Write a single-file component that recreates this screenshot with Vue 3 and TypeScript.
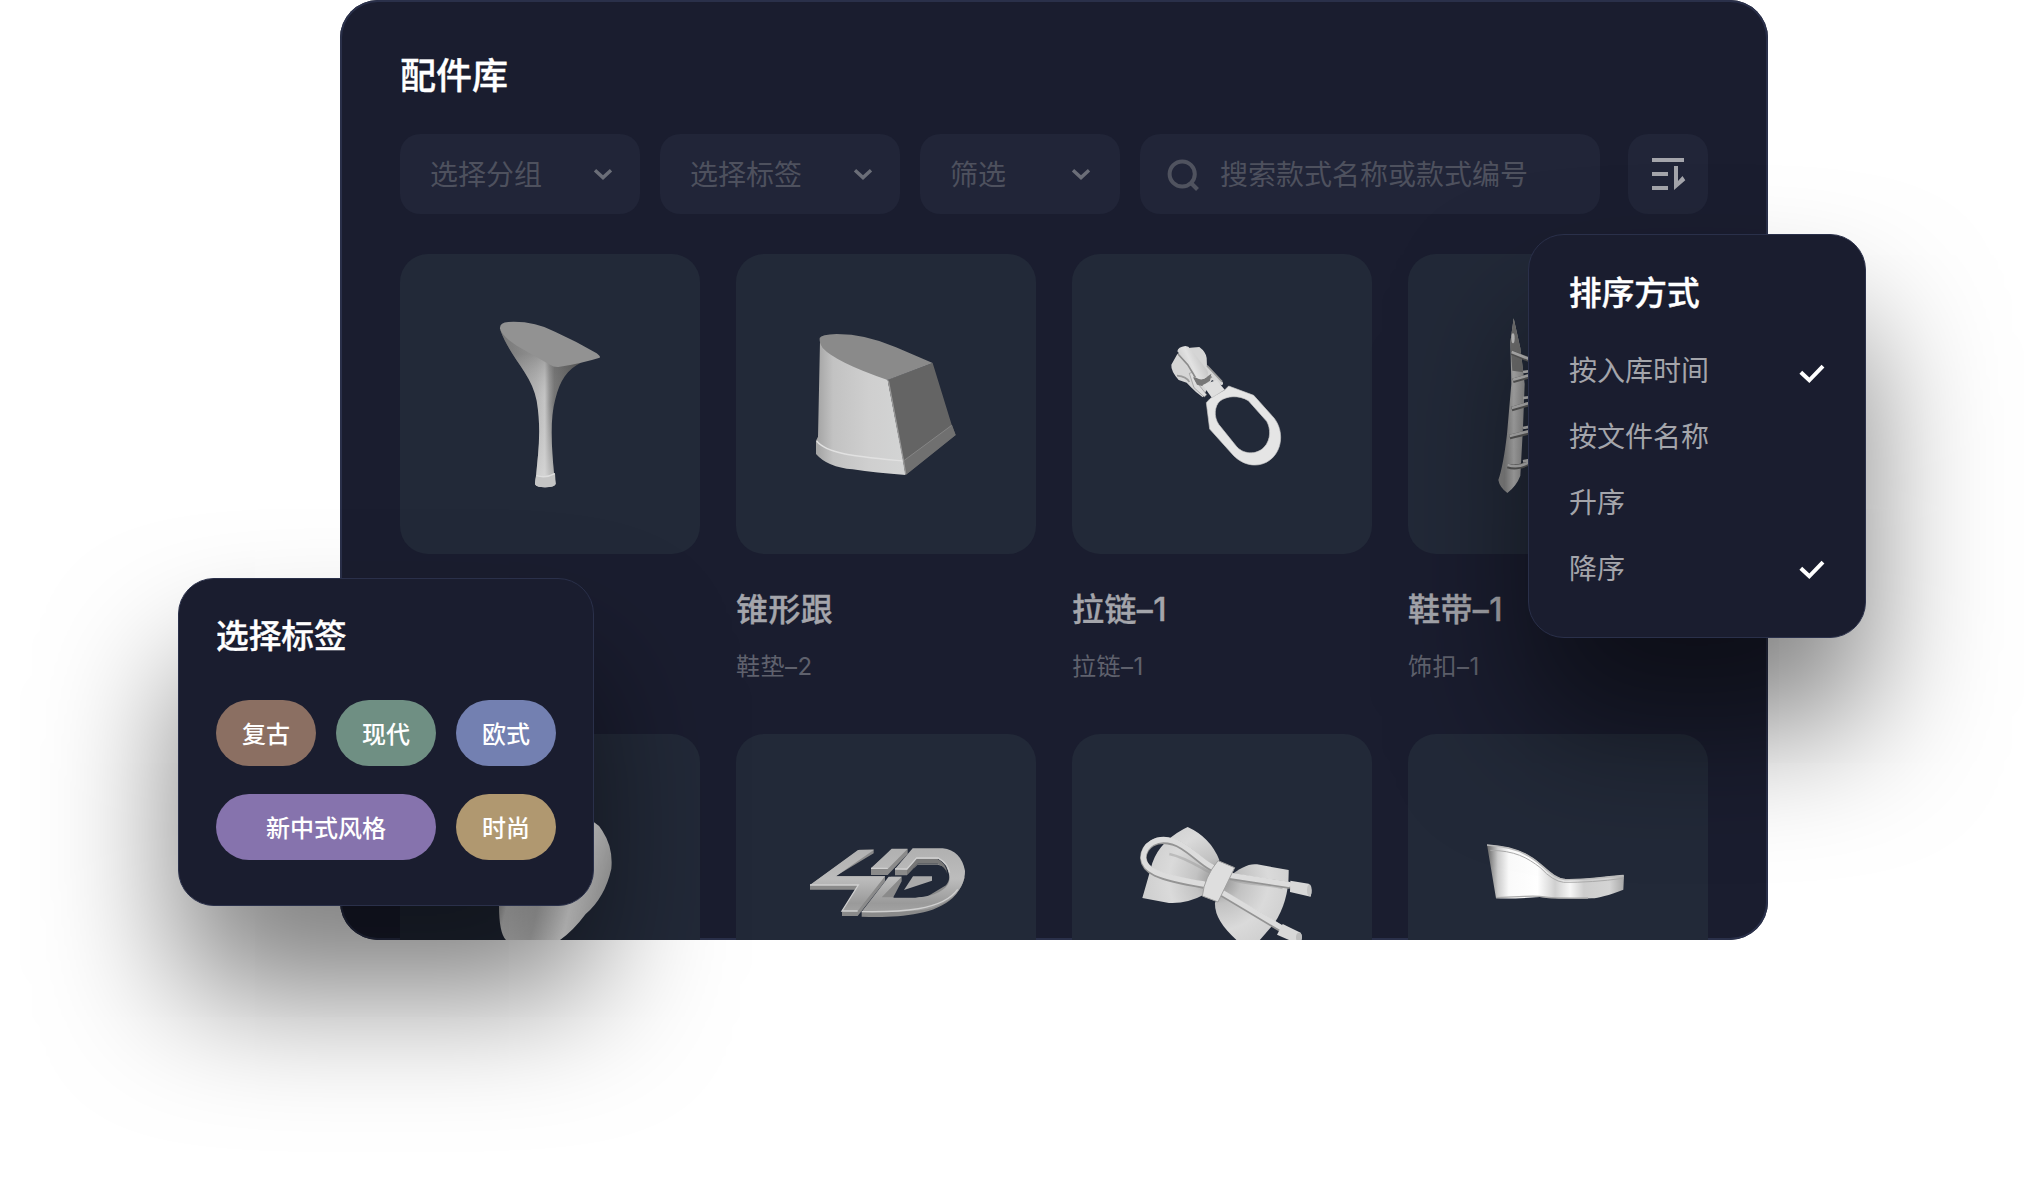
<script setup lang="ts">
interface Filter { label: string; size: 'wide' | 'narrow' }
interface Part { id: string; name?: string; note?: string }
interface SortOption { label: string; checked: boolean }
interface Tag { label: string; color: string; wide?: boolean }

const filters: Filter[] = [
  { label: '选择分组', size: 'wide' },
  { label: '选择标签', size: 'wide' },
  { label: '筛选', size: 'narrow' },
]

const parts: Part[] = [
  { id: 'heel' },
  { id: 'block', name: '锥形跟', note: '鞋垫–2' },
  { id: 'zip', name: '拉链–1', note: '拉链–1' },
  { id: 'strap', name: '鞋带–1', note: '饰扣–1' },
  { id: 'curve' },
  { id: 'badge' },
  { id: 'bow' },
  { id: 'wedge' },
]

const sortOptions: SortOption[] = [
  { label: '按入库时间', checked: true },
  { label: '按文件名称', checked: false },
  { label: '升序', checked: false },
  { label: '降序', checked: true },
]

const tags: Tag[] = [
  { label: '复古', color: '#8b6f62' },
  { label: '现代', color: '#6f8f83' },
  { label: '欧式', color: '#7380b1' },
  { label: '新中式风格', color: '#8673ad', wide: true },
  { label: '时尚', color: '#b09870' },
]
</script>

<template>
  <main class="stage">
    <section class="panel">
      <h1 class="panel-title">配件库</h1>
      <div class="toolbar">
        <button v-for="f in filters" :key="f.label" class="select" :class="f.size">
          <span>{{ f.label }}</span>
          <svg width="20" height="12" viewBox="0 0 20 12"><path d="M2 2.2 10 9.6 18 2.2" fill="none" stroke="#6b6e78" stroke-width="3.4" /></svg>
        </button>
        <div class="search">
          <svg width="36" height="36" viewBox="0 0 36 36" fill="none" stroke="#50535f" stroke-width="4">
            <circle cx="16.2" cy="18" r="12.6" /><path d="M25 27 31.5 33.5" />
          </svg>
          <span>搜索款式名称或款式编号</span>
        </div>
        <button class="sort">
          <svg width="34" height="32" viewBox="0 0 34 32" fill="#a4a5ab">
            <path d="M0 0h32v4H0zM0 14h16v4H0zM0 28h16v4H0z" />
            <path d="M22 8h4v15l4.5-5 2.8 4.2L22 32z" />
          </svg>
        </button>
      </div>

      <div class="grid">
        <article v-for="p in parts" :key="p.id" class="part">
          <div class="thumb">
            <svg v-if="p.id === 'heel'" viewBox="0 0 900 900">
              <defs>
                <linearGradient id="heel-stem" x1="300" x2="540" y1="0" y2="0" gradientUnits="userSpaceOnUse">
                  <stop offset="0" stop-color="#858585" /><stop offset=".45" stop-color="#b4b4b4" /><stop offset=".56" stop-color="#c5c5c5" /><stop offset=".62" stop-color="#8d8d8d" /><stop offset=".68" stop-color="#686868" /><stop offset="1" stop-color="#3e3e3e" />
                </linearGradient>
                <linearGradient id="heel-light" x1="0" x2="0" y1="300" y2="670" gradientUnits="userSpaceOnUse">
                  <stop offset="0" stop-color="#666" stop-opacity=".45" /><stop offset=".4" stop-color="#ccc" stop-opacity=".1" /><stop offset="1" stop-color="#ddd" stop-opacity=".65" />
                </linearGradient>
              </defs>
              <path d="M301 228C330 310 396 360 410 440 425 530 414 600 408 668L405 690Q408 700 436 700 464 700 467 690L462 658C456 590 448 500 466 435 480 380 500 347 545 325L465 330Z" fill="url(#heel-stem)" />
              <path d="M301 228C330 310 396 360 410 440 425 530 414 600 408 668L405 690Q408 700 436 700 464 700 467 690L462 658C456 590 448 500 466 435 480 380 500 347 545 325L465 330Z" fill="url(#heel-light)" />
              <path d="M300 225Q298 205 325 204 400 200 465 233 530 262 590 298 603 308 599 311 545 328 475 339 460 340 450 332L350 275Q310 250 300 225Z" fill="#929292" />
              <path d="M408 664Q436 672 465 657L467 690Q460 700 434 700 408 699 405 689Z" fill="#c4c4c4" />
              <path d="M409 665Q438 674 464 659" fill="none" stroke="#dedede" stroke-width="4" />
            </svg>

            <svg v-else-if="p.id === 'block'" viewBox="0 0 900 900">
              <defs>
                <linearGradient id="block-side" x1="245" x2="500" y1="0" y2="0" gradientUnits="userSpaceOnUse">
                  <stop offset="0" stop-color="#a5a5a5" /><stop offset=".18" stop-color="#c2c2c2" /><stop offset=".6" stop-color="#cfcfcf" /><stop offset="1" stop-color="#d3d4d4" />
                </linearGradient>
              </defs>
              <path d="M252 262 246 548 240 560V600Q275 640 350 646 420 657 509 663L500 610 455 377Z" fill="url(#block-side)" />
              <path d="M455 377 590 327 647 512 659 543 509 663 502 620Z" fill="#646464" />
              <path d="M502 621 648 513 659 543 509 663Z" fill="#707070" />
              <path d="M251 252Q255 242 302 240 390 240 480 280L590 327 455 378Q300 325 260 282 249 265 251 252Z" fill="#8a8a8a" />
              <path d="M242 561C272 600 360 607 500 621" fill="none" stroke="#e1e1e1" stroke-width="4" />
              <path d="M502 621 647 514" stroke="#858585" stroke-width="3" />
              <path d="M457 380 502 618 509 660" fill="none" stroke="#999" stroke-width="4" />
            </svg>

            <svg v-else-if="p.id === 'zip'" viewBox="0 0 900 900">
              <defs>
                <linearGradient id="zip-bar" x1="320" x2="410" y1="340" y2="300" gradientUnits="userSpaceOnUse">
                  <stop offset="0" stop-color="#c5c5c5" /><stop offset=".4" stop-color="#e2e2e2" /><stop offset="1" stop-color="#b5b5b5" />
                </linearGradient>
              </defs>
              <path d="M355 281 382 279Q402 294 404 312L405 337 452 384Q456 392 448 394L420 378 392 430 372 414Q354 397 344 386L320 378Q296 350 298 332L316 300Z" fill="#d5d5d5" />
              <path d="M315 365Q345 368 352 384M405 335 450 383M385 386 420 368" fill="none" stroke="#9a9a9a" stroke-width="5" />
              <path d="M352 358 362 355 372 382 404 422 397 429 366 401Z" fill="#ddd" stroke="#8f8f8f" stroke-width="2" />
              <path d="M363 370 395 375 418 359 414 380 390 396 375 392Z" fill="#777" />
              <path d="M316 292Q318 279 340 276 350 276 356 285L405 348Q411 357 405 369 390 382 374 372Q364 350 343 324Z" fill="url(#zip-bar)" />
              <path d="M318 300 347 332 370 370" fill="none" stroke="#8b8b8b" stroke-width="5" />
              <path d="M392 393 434 378 458 407 420 432Z" fill="#dedede" />
              <path fill-rule="evenodd" d="M403 446 414 434 458 408 470 396 545 424 606 492C636 530 632 588 595 617 560 644 515 635 485 605L413 525ZM444 441C428 455 424 487 440 511L490 573C511 602 553 604 576 580 598 557 596 523 584 502L529 440C500 422 463 426 444 441Z" fill="#e5e5e5" stroke="#c9c9c9" stroke-width="2" />
            </svg>

            <svg v-else-if="p.id === 'strap'" viewBox="0 0 900 900">
              <defs>
                <linearGradient id="strap-skin" x1="290" x2="345" y1="0" y2="0" gradientUnits="userSpaceOnUse">
                  <stop offset="0" stop-color="#858585" /><stop offset=".5" stop-color="#b8b8b8" /><stop offset="1" stop-color="#9a9a9a" />
                </linearGradient>
              </defs>
              <path d="M317 193 337 282 350 390 345 520 337 665Q326 695 298 717 275 700 271 678 286 635 297 540L310 390 307 265Z" fill="url(#strap-skin)" />
              <path d="M317 193 337 282 346 355 313 350 307 265Z" fill="#707070" />
              <ellipse cx="315" cy="253" rx="5" ry="15" fill="#c5c5c5" />
              <g fill="none" stroke="#5c5c5c" stroke-width="14"><path d="M311 296 366 318M315 380 366 366M311 465 366 449M305 549 366 534M299 636C326 645 350 633 366 626" /></g>
              <g fill="none" stroke="#bababa" stroke-width="8"><path d="M311 294 366 316M315 377 366 363M311 462 366 446M305 546 366 531M299 633C326 642 350 633 366 623M345 354 370 351M345 432 370 429M345 522 370 517M345 622 370 617" /></g>
            </svg>

            <svg v-else-if="p.id === 'curve'" viewBox="0 0 900 900">
              <defs>
                <linearGradient id="curve-skin" x1="300" x2="640" y1="420" y2="500" gradientUnits="userSpaceOnUse">
                  <stop offset="0" stop-color="#909090" /><stop offset=".12" stop-color="#dcdcdc" /><stop offset=".38" stop-color="#c6c6c6" /><stop offset=".65" stop-color="#ececec" /><stop offset="1" stop-color="#9c9c9c" />
                </linearGradient>
              </defs>
              <path d="M540 250Q592 260 607 290 640 340 634 404 615 490 557 540 520 590 480 618L320 620Q297 600 297 515L520 490Z" fill="url(#curve-skin)" />
            </svg>

            <svg v-else-if="p.id === 'badge'" viewBox="0 0 900 900">
              <defs>
                <linearGradient id="metal" x1="0" x2="0" y1="340" y2="550" gradientUnits="userSpaceOnUse">
                  <stop offset="0" stop-color="#b0b0b0" /><stop offset=".45" stop-color="#bcbcbc" /><stop offset=".8" stop-color="#9a9a9a" /><stop offset="1" stop-color="#a8a8a8" />
                </linearGradient>
              </defs>
              <g fill="#8a8a8a">
                <path d="M222 453V467H367L318 534V546H365L447 442V426H300L413 358V346L370 347Z" />
                <path d="M405 403V423H455L515 360V345H470Z" /><path d="M477 406V424H513L545 390H610C640 396 650 430 630 454L570 490H472L497 442V428H465L377 535V548C470 551 590 548 650 492 680 462 691 430 686 400V435L675 400Z" />
              </g>
              <path d="M222 453 366 348H413L300 427H447L365 531H318L367 453Z" fill="url(#metal)" />
              <path d="M405 403 467 344H515L455 405Z" fill="url(#metal)" />
              <path d="M477 405 530 343H620Q676 350 687 411C687 458 654 507 573 526Q500 537 377 533L458 428H497L437 490H538C609 487 646 458 640 425Q636 391 607 375H542L513 407Z" fill="url(#metal)" />
              <path d="M630 400C648 440 600 482 538 491H472L504 444V472L588 440V427H531L513 424 545 392H605Z" fill="#222938" />
              <path d="M513 407V422L545 389H605Q630 400 634 420 632 390 605 375H542Z" fill="#777" />
              <path d="M504 468 531 427H588V440Z" fill="#aaa" />
              <path d="M222 453H367L318 531H365M405 403H455M477 405H513L542 372H607Q636 388 641 416M377 533C490 535 620 530 665 466" fill="none" stroke="#d0d0d0" stroke-width="4" />
            </svg>

            <svg v-else-if="p.id === 'bow'" viewBox="0 0 900 900">
              <defs>
                <radialGradient id="bow-cloth" cx="440" cy="440" r="230" gradientUnits="userSpaceOnUse">
                  <stop offset="0" stop-color="#8c8c8c" /><stop offset=".3" stop-color="#c2c2c2" /><stop offset=".65" stop-color="#dadada" /><stop offset="1" stop-color="#cecece" />
                </radialGradient>
              </defs>
              <path d="M211 492 236 405Q252 330 335 285L347 279Q415 310 442 378L432 415 400 480Q345 510 291 507Z" fill="url(#bow-cloth)" />
              <path d="M468 431Q520 386 555 391L650 408Q652 500 607 568L560 622H498Q426 560 429 506Z" fill="url(#bow-cloth)" />
              <path d="M292 360C340 370 380 398 420 419M255 415 395 458M475 435C530 455 580 448 632 462" fill="none" stroke="#929292" stroke-width="8" opacity=".4" />
              <g fill="none" stroke-linecap="round">
                <path d="M420 402C385 385 345 336 303 325 254 309 215 334 214 373 217 410 250 431 395 454M474 427 650 454M452 480 625 583" stroke="#949494" stroke-width="20" />
                <path d="M419 398C385 381 345 332 303 321 254 306 215 332 214 371 217 406 250 426 395 450M474 424 650 451M452 476 625 579" stroke="#dcdcdc" stroke-width="16" />
              </g>
              <path d="M438 380 488 401 438 504 391 486Q397 430 438 380Z" fill="#dedede" stroke="#a1a1a1" stroke-width="3" />
              <path d="M655 440 710 449Q723 466 716 488L654 474Z" fill="#d8d8d8" /><ellipse cx="712" cy="469" rx="7" ry="18" fill="#c4c4c4" />
              <path d="M632 570 686 596Q693 608 685 622H660L615 602Z" fill="#d8d8d8" /><ellipse cx="681" cy="610" rx="9" ry="14" fill="#bdbdbd" />
            </svg>

            <svg v-else viewBox="0 0 900 900">
              <defs>
                <linearGradient id="wedge-skin" x1="237" x2="646" y1="0" y2="0" gradientUnits="userSpaceOnUse">
                  <stop offset="0" stop-color="#666" /><stop offset=".08" stop-color="#ccc" /><stop offset=".16" stop-color="#fafafa" /><stop offset=".37" stop-color="#fff" /><stop offset=".5" stop-color="#cfcfcf" /><stop offset=".61" stop-color="#f6f6f6" /><stop offset=".71" stop-color="#cdcdcd" /><stop offset=".9" stop-color="#d4d4d4" /><stop offset="1" stop-color="#aaa" />
                </linearGradient>
              </defs>
              <path d="M237 332Q319 337 365 367C406 390 430 431 471 436 535 438 590 427 648 424L646 467Q580 492 552 493 470 495 396 489 320 495 264 493Z" fill="url(#wedge-skin)" />
              <path d="M237 333Q319 338 365 368C406 391 430 432 471 437 535 439 590 428 647 425" fill="none" stroke="#bcbcbc" stroke-width="5" />
              <path d="M247 349C320 350 357 370 397 401Q435 442 467 445 550 446 646 433" fill="none" stroke="#aaa" stroke-width="3" />
              <path d="M264 491Q310 489 350 487T410 489 540 492" fill="none" stroke="#aaa" stroke-width="4" />
            </svg>
          </div>
          <h2>{{ p.name }}</h2>
          <p>{{ p.note }}</p>
        </article>
      </div>
    </section>

    <aside class="popup sort-popup">
      <h3>排序方式</h3>
      <ul>
        <li v-for="o in sortOptions" :key="o.label">
          <span>{{ o.label }}</span>
          <svg v-if="o.checked" width="26" height="20" viewBox="0 0 26 20"><path d="M1.8 8.2 10.3 16.3 24 2.2" fill="none" stroke="#fff" stroke-width="4" /></svg>
        </li>
      </ul>
    </aside>

    <aside class="popup tag-popup">
      <h3>选择标签</h3>
      <div class="tags">
        <span v-for="t in tags" :key="t.label" class="tag" :class="{ wide: t.wide }" :style="{ background: t.color }">{{ t.label }}</span>
      </div>
    </aside>
  </main>
</template>

<style>
body { background: #fff; overflow: hidden; }
</style>

<style scoped>
.stage {
  position: relative;
  width: 2044px;
  height: 1191px;
  overflow: hidden;
  font-family: Inter, "Noto Sans CJK SC", sans-serif;
  color: #fff;
}
.stage *, .stage { box-sizing: border-box; }
h1, h2, h3, p, ul { margin: 0; padding: 0; font-weight: 500; }
h1, h2, h3 { -webkit-text-stroke: .35px currentColor; }
button { border: 0; font: inherit; padding: 0; }
.panel {
  width: 1428px;
  height: 940px;
  margin-left: 340px;
  padding: 49px 60px 0;
  background: #1a1d2f;
  border-radius: 38px;
  box-shadow: inset 0 0 0 2px #2a304a;
  overflow: hidden;
}
.panel-title { font-size: 36px; line-height: 54px; }
.toolbar { display: flex; gap: 20px; margin-top: 31px; }
.select, .search, .sort {
  display: flex;
  align-items: center;
  height: 80px;
  border-radius: 20px;
  background: #212538;
  color: #4e515e;
  font-size: 28px;
  line-height: 40px;
}
.select span, .search span { padding-top: 2px; }
.select { justify-content: space-between; padding: 0 27px 0 30px; }
.select.wide { width: 240px; }
.select.narrow { width: 200px; padding-right: 29px; }
.search { width: 460px; padding-left: 26px; gap: 18px; }
.sort { width: 80px; margin-left: 8px; justify-content: center; padding-left: 2px; }
.grid { display: grid; grid-template-columns: repeat(4, 300px); gap: 0 36px; margin-top: 40px; }
.part { height: 480px; }
.thumb { height: 300px; border-radius: 28px; background: #222938; overflow: hidden; }
.thumb svg { display: block; width: 300px; height: 300px; }
.part h2 { margin-top: 33px; height: 46px; font-size: 32px; line-height: 46px; color: #a4a5ab; letter-spacing: .4px; }
.part p { margin-top: 16px; font-size: 24px; line-height: 36px; color: #5f616d; font-weight: 400; letter-spacing: .5px; }
.popup {
  position: absolute;
  background: #1a1d2f;
  border: 1px solid #2a304a;
  border-radius: 36px;
  box-shadow: 0 88px 132px rgba(0, 0, 0, .5);
}
.popup h3 { font-size: 32.7px; line-height: 46px; }
.sort-popup { left: 1528px; top: 234px; width: 338px; height: 404px; padding: 35px 40px 0; }
.sort-popup ul { list-style: none; margin-top: 22px; font-weight: 400; }
.sort-popup li { display: flex; align-items: center; justify-content: space-between; height: 66px; font-size: 28px; line-height: 40px; color: #a4a5ab; }
.sort-popup li svg { margin-top: 6px; }
.sort-popup li:last-child svg { margin-top: 2px; }
.tag-popup { left: 178px; top: 578px; width: 416px; height: 328px; padding: 34px 37px 0; }
.tags { display: grid; grid-template-columns: repeat(3, 100px); gap: 28px 20px; margin-top: 41px; }
.tag { display: flex; align-items: center; justify-content: center; height: 66px; padding-bottom: 1px; border-radius: 33px; font-size: 24px; font-weight: 500; }
.tag.wide { grid-column: span 2; }
</style>
